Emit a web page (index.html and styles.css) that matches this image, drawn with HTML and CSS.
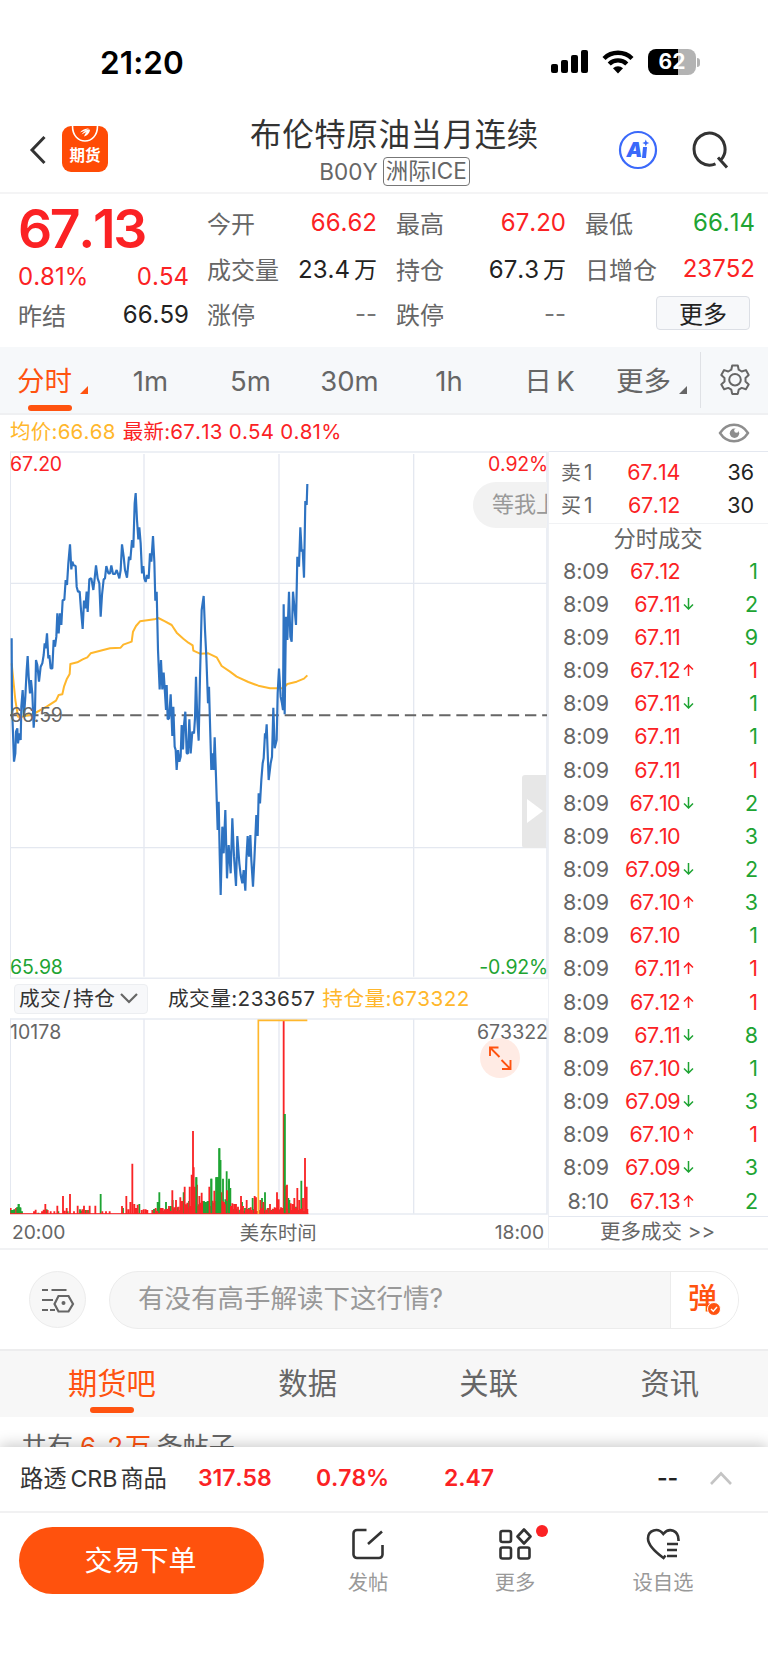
FILE: index.html
```html
<!DOCTYPE html>
<html lang="zh-CN">
<head>
    <meta charset="UTF-8">
    <meta name="viewport" content="width=device-width, initial-scale=1.0">
    <title>布伦特原油当月连续</title>
    <link rel="stylesheet" href="styles.css">
</head>
<body>
    <div class="status">
        <span class="clock">21:20</span>
        <div class="status-icons">
            <svg width="38" height="24" viewBox="0 0 38 24">
                <rect x="0" y="14" width="7" height="9" rx="2"/>
                <rect x="10" y="10" width="7" height="13" rx="2"/>
                <rect x="20" y="5" width="7" height="18" rx="2"/>
                <rect x="30" y="0" width="7" height="23" rx="2"/>
            </svg>
            <svg class="wifi" width="32" height="24" viewBox="0 0 32 24">
                <path d="M2 8.5a20 20 0 0 1 28 0M7.2 14a12.6 12.6 0 0 1 17.6 0" fill="none" stroke="#000" stroke-width="4.4"/>
                <path d="M16 23.5l-5-5.2a7.2 7.2 0 0 1 10 0z"/>
            </svg>
            <div class="battery"><span>62</span></div>
            <i class="nub"></i>
        </div>
    </div>

    <header class="header">
        <div class="header-left">
            <svg width="18" height="30" viewBox="0 0 18 30"><path d="M15.500 2L3 15l12.500 13" fill="none" stroke="#333" stroke-width="3"/></svg>
            <div class="logo">
                <svg width="46" height="19" viewBox="0 0 46 19">
                    <path d="M10.500 0c0 20 25 20 25 0" fill="none" stroke="#fff" stroke-width="1.600"/>
                    <path d="M18 6.500c2-2.500 5-4 9-4.200-1.500 1.600-5 2.700-9 4.200zM19.500 8.500c2-3 5-5 8-5.500-2 2.500-4.500 4-8 5.500zM22 10.500c1-3 3-6 6-7 0 3-2.500 6-6 7z" fill="#fff"/>
                </svg>
                <b>期货</b>
            </div>
        </div>
        <div class="header-title">
            <h1>布伦特原油当月连续</h1>
            <p>B00Y <span>洲际ICE</span></p>
        </div>
        <div class="header-right">
            <svg width="40" height="40" viewBox="0 0 40 40">
                <circle cx="20" cy="20" r="18" fill="none" stroke="#3b69fa" stroke-width="2.200"/>
                <text x="8.500" y="27" class="ai-text">A</text>
                <path d="M25 17h4l-1 11h-4z" fill="#3b69fa"/>
                <path d="M27.800 9.500l1 2.500 2.500 1-2.500 1-1 2.500-1-2.500-2.500-1 2.500-1z" fill="#3b69fa"/>
            </svg>
            <svg width="38" height="40" viewBox="0 0 38 40">
                <path d="M24.500 33.800a15.500 16 0 1 1 5.500-4M27 27.500l9 10" fill="none" stroke="#333" stroke-width="3"/>
            </svg>
        </div>
    </header>

    <section class="quote">
        <div class="quote-main">
            <strong>67.13</strong>
            <p class="red"><span>0.81%</span><span>0.54</span></p>
            <p class="settle"><em>昨结</em><span>66.59</span></p>
        </div>
        <div class="quote-grid">
            <p><em>今开</em><span class="red">66.62</span></p>
            <p><em>最高</em><span class="red">67.20</span></p>
            <p><em>最低</em><span class="green">66.14</span></p>
            <p><em>成交量</em><span>23.4<i>万</i></span></p>
            <p><em>持仓</em><span>67.3<i>万</i></span></p>
            <p><em>日增仓</em><span class="red">23752</span></p>
            <p><em>涨停</em><span class="none">--</span></p>
            <p><em>跌停</em><span class="none">--</span></p>
            <p class="more-cell"><button class="more-btn">更多</button></p>
        </div>
    </section>

    <nav class="periods">
        <a class="active tri p1">分时</a>
        <a class="p2">1m</a>
        <a class="p3">5m</a>
        <a class="p4">30m</a>
        <a class="p5">1h</a>
        <a class="p6">日 K</a>
        <a class="tri p7">更多</a>
        <div class="gear">
            <svg width="34" height="34" viewBox="0 0 34 34" fill="none" stroke="#666" stroke-width="2" stroke-linejoin="round">
                <path d="M14.200 2.500h5.600l.9 4.200 3 1.800 4.200-1.400 2.800 4.900-3.200 2.900v3.600l3.200 2.900-2.800 4.900-4.200-1.400-3 1.800-.9 4.200h-5.600l-.9-4.200-3-1.800-4.200 1.400-2.800-4.900 3.200-2.900v-3.600l-3.200-2.900 2.800-4.900 4.200 1.400 3-1.800z"/>
                <circle cx="17" cy="16.700" r="5.800"/>
            </svg>
        </div>
    </nav>

    <div class="info">
        <span class="avg">均价:66.68</span>
        <span class="red">最新:67.13 0.54 0.81%</span>
        <svg width="32" height="22" viewBox="0 0 32 22">
            <path d="M2 11C9 0 23 0 30 11 23 22 9 22 2 11z" fill="none" stroke="#8e8e8e" stroke-width="2.400"/>
            <circle cx="16.500" cy="11.300" r="4.700" fill="#8e8e8e"/>
            <circle cx="18.500" cy="8.500" r="2.300" fill="#fff"/>
        </svg>
    </div>

    <main class="market">
        <div class="charts">
            <div class="pane price">
                <svg width="538" height="528" viewBox="30 123 1614 1584" fill="none">
                    <path d="M31 125V1707M432 132V1700M837 132V1700M1241 132V1700M30 520H1641M30 1313H1641" stroke="#e4e8f0" stroke-width="4"/>
                    <path d="M30 126H1641V1705H30" stroke="#e8ebf2" stroke-width="5"/>
                    <path d="M30 916H1641" stroke="#666" stroke-width="6" stroke-dasharray="34 17.500"/>
                    <polyline class="line-avg" points="35,760 40,810 46,870 54,920 66,920 100,912 140,890 168,872 176,855 187,853 192,830 200,808 209,792 211,762 232,757 248,748 262,742 272,730 298,723 330,715 362,713 370,704 395,695 399,665 408,648 420,634 463,628 475,624 495,634 515,645 530,668 550,686 565,698 578,706 580,722 600,731 625,730 650,742 665,768 690,785 710,800 745,816 775,827 810,835 850,835 862,822 890,815 912,806 922,796"/>
                    <polyline class="line-price" points="35,685 36,890 39,970 42,1055 46,1030 48,965 52,955 54,1000 58,970 62,990 64,890 68,840 72,920 76,860 80,780 83,738 86,800 90,850 93,810 97,850 101,953 105,900 108,750 112,765 117,815 122,770 127,760 131,735 134,700 137,715 141,670 145,745 148,735 152,775 157,775 161,690 165,710 169,680 172,610 176,670 180,610 184,645 188,570 193,570 197,510 201,525 205,460 210,403 214,478 217,455 221,466 227,468 230,530 234,545 239,545 243,600 248,657 252,572 256,595 260,545 263,606 268,508 274,505 280,540 284,505 288,466 293,505 298,520 302,620 306,555 311,508 315,505 319,468 325,490 330,490 334,466 339,492 345,492 350,480 354,492 358,505 362,480 366,403 371,440 375,480 381,503 387,440 391,450 396,390 400,413 404,280 407,249 411,330 415,388 418,352 422,400 426,490 430,468 433,505 437,516 441,495 446,506 450,430 454,455 459,378 463,455 466,572 470,545 474,720 479,838 483,750 487,838 491,788 495,850 498,900 500,825 503,928 507,925 512,853 517,978 520,890 524,1010 527,1020 530,1080 534,1020 538,1055 542,1040 545,945 549,1018 552,945 556,905 560,1030 564,1030 568,928 572,1030 577,965 582,970 585,925 588,800 592,930 596,992 600,800 605,600 611,558 615,660 619,740 624,880 627,830 630,940 634,1080 638,1030 641,1080 644,982 648,1100 653,1260 656,1175 659,1330 662,1455 667,1250 671,1330 676,1200 681,1405 686,1305 692,1390 697,1225 702,1340 708,1428 712,1278 718,1360 722,1395 727,1420 731,1380 736,1442 739,1350 743,1278 747,1340 751,1275 754,1350 759,1430 763,1350 769,1215 773,1278 776,1150 780,1180 784,1110 788,1060 791,1045 795,970 797,985 800,943 806,1110 812,1060 816,1040 820,893 824,1015 830,990 833,850 837,776 842,860 846,880 849,900 851,583 854,913 858,620 862,690 867,545 871,680 875,695 879,545 884,600 888,645 892,440 897,470 901,352 905,425 908,418 912,503 916,273 920,285 922,222"/>
                </svg>
                <span class="lab tl red">67.20</span>
                <span class="lab tr red">0.92%</span>
                <span class="lab ml">66.59</span>
                <span class="lab bl green">65.98</span>
                <span class="lab br green">-0.92%</span>
                <div class="bubble">等我上</div>
                <div class="drawer"></div>
            </div>

            <div class="vol-bar">
                <div class="select">成交<i>/</i>持仓
                    <svg width="20" height="13" viewBox="0 0 20 13"><path d="M2 2l8 8 8-8" fill="none" stroke="#666" stroke-width="2.200"/></svg>
                </div>
                <span class="vol">成交量:233657</span>
                <span class="avg">持仓量:673322</span>
            </div>

            <div class="pane volume">
                <svg width="538" height="197" viewBox="30 128 1614 591" fill="none">
                    <path d="M31 130V716M432 130V716M837 130V716M1241 130V716" stroke="#e4e8f0" stroke-width="4"/>
                    <path d="M30 131H1641V716H30" stroke="#e8ebf2" stroke-width="5"/>
                    <g id="bars" stroke-width="5.500"></g>
                    <path d="M775 716V135H922" stroke="#ffb72c" stroke-width="5"/>
                </svg>
                <span class="lab tl">10178</span>
                <span class="lab tr">673322</span>
                <div class="expand">
                    <svg width="26" height="26" viewBox="0 0 26 26"><path d="M3 11V2.500h8.500M3 2.500L12.500 12M23.500 15v9H15M23.500 24L14.500 15" fill="none" stroke="#ff5310" stroke-width="1.900"/></svg>
                </div>
            </div>
            <div class="axis"><span>20:00</span><span>美东时间</span><span>18:00</span></div>
        </div>

        <aside class="trades">
            <div class="depth">
                <p><em>卖<i>1</i></em><span class="red">67.14</span><b>36</b></p>
                <p><em>买<i>1</i></em><span class="red">67.12</span><b>30</b></p>
            </div>
            <h2>分时成交</h2>
            <div id="list"></div>
            <a class="more-trades">更多成交 &gt;&gt;</a>
        </aside>
    </main>

    <div class="comment">
        <div class="round">
            <svg width="34" height="26" viewBox="0 0 34 26" fill="none" stroke="#666" stroke-width="2.200">
                <path d="M1 3h6M10.500 3h15M1 13h11M1 23h6M9 23h5"/>
                <path d="M17.500 9h10l4.500 8-4.500 7.500h-10L13.500 17z"/>
                <circle cx="22.500" cy="16" r="2" fill="#666" stroke="none"/>
            </svg>
        </div>
        <div class="input">
            <span>有没有高手解读下这行情?</span>
            <div class="dan">弹
                <svg width="14" height="14" viewBox="0 0 14 14"><circle cx="7" cy="7" r="6.500" fill="#ff5310" stroke="#fff"/><path d="M4 7l2.300 2.300L10 5" fill="none" stroke="#fff" stroke-width="1.400"/></svg>
            </div>
        </div>
    </div>

    <nav class="tabs">
        <a class="active">期货吧</a>
        <a>数据</a>
        <a>关联</a>
        <a>资讯</a>
    </nav>

    <div class="posts"><p>共有<b>6.2万</b>条帖子</p></div>

    <div class="index-bar">
        <span class="name">路透<i>CRB</i>商品</span>
        <b class="red i1">317.58</b>
        <b class="red i2">0.78%</b>
        <b class="red i3">2.47</b>
        <b class="i4">--</b>
        <svg width="24" height="14" viewBox="0 0 24 14"><path d="M2 13L12 2.500 22 13" fill="none" stroke="#c4c4c4" stroke-width="2.600"/></svg>
    </div>

    <footer class="actions">
        <button class="order">交易下单</button>
        <a>
            <svg width="34" height="34" viewBox="0 0 34 34" fill="none" stroke="#333" stroke-width="2.600">
                <path d="M15.500 3H6a3.500 3.500 0 0 0-3.500 3.500v21A3.500 3.500 0 0 0 6 31h22a3.500 3.500 0 0 0 3.500-3.500V18M31 4.500L17 17"/>
            </svg>
            发帖
        </a>
        <a class="has-dot">
            <svg width="34" height="34" viewBox="0 0 34 34" fill="none" stroke="#333" stroke-width="2.600">
                <rect x="2.500" y="4" width="10.500" height="11" rx="2"/>
                <rect x="2.500" y="20.500" width="10.500" height="11" rx="2"/>
                <rect x="20.500" y="20.500" width="11" height="11" rx="2"/>
                <path d="M26 2.500l6.500 7-6.500 7-6.500-7z" stroke-linejoin="round"/>
            </svg>
            更多
        </a>
        <a>
            <svg width="34" height="34" viewBox="0 0 34 34" fill="none" stroke="#333" stroke-width="2.600">
                <path d="M19.500 28.500L17.500 31C10 25.500 2 19 2 11.500 2 3 12 0 17.300 7 23 0 33 3 32.500 14M21 17h11M21 23h10M21 29h10"/>
            </svg>
            设自选
        </a>
    </footer>

    <script>
        // price, direction (1 up, -1 down, 0 same), lots, side
        const trades = [
            ["67.12", 0, 1, "g"], ["67.11", -1, 2, "g"], ["67.11", 0, 9, "g"], ["67.12", 1, 1, "r"],
            ["67.11", -1, 1, "g"], ["67.11", 0, 1, "g"], ["67.11", 0, 1, "r"], ["67.10", -1, 2, "g"],
            ["67.10", 0, 3, "g"], ["67.09", -1, 2, "g"], ["67.10", 1, 3, "g"], ["67.10", 0, 1, "g"],
            ["67.11", 1, 1, "r"], ["67.12", 1, 1, "r"], ["67.11", -1, 8, "g"], ["67.10", -1, 1, "g"],
            ["67.09", -1, 3, "g"], ["67.10", 1, 1, "r"], ["67.09", -1, 3, "g"], ["67.13", 1, 2, "g"]
        ];
        const up = '<svg class="red" width="11" height="12" viewBox="0 0 11 12"><path d="M5.500 12V1.500M1 5.500l4.500-4.500L10 5.500"/></svg>';
        const down = '<svg class="green" width="11" height="12" viewBox="0 0 11 12"><path d="M5.500 0v10.500M1 6.500L5.500 11 10 6.500"/></svg>';
        document.getElementById("list").innerHTML = trades.map((t, i) => {
            const time = i === trades.length - 1 ? "8:10" : "8:09";
            const arrow = t[1] > 0 ? up : t[1] < 0 ? down : "";
            const side = t[3] === "r" ? "red" : "green";
            return `<p><em>${time}</em><span class="red">${t[0]}</span><i>${arrow}</i><b class="${side}">${t[2]}</b></p>`;
        }).join("");

        // volume bars: x, height
        const base = 716;
        const red = [[32,18],[36,8],[48,18],[102,8],[107,13],[126,8],[131,13],[136,30],[143,12],[152,8],[163,8],[172,25],[189,54],[194,10],[200,18],[210,60],[222,8],[233,25],[247,14],[252,25],[260,12],[269,25],[286,25],[307,8],[318,8],[329,8],[366,24],[379,54],[385,14],[391,36],[397,151],[403,30],[408,18],[413,28],[425,12],[431,14],[437,14],[442,12],[482,18],[488,18],[494,14],[500,16],[507,24],[517,71],[523,20],[528,42],[535,22],[541,50],[546,38],[554,82],[563,20],[569,82],[575,118],[579,249],[581,140],[585,82],[591,88],[598,54],[605,64],[628,82],[637,40],[643,70],[664,65],[672,36],[681,71],[697,32],[703,30],[708,30],[714,22],[723,54],[729,24],[740,42],[746,14],[752,20],[764,54],[768,50],[781,42],[790,36],[803,18],[810,30],[818,16],[824,20],[831,65],[836,44],[843,20],[851,582],[857,85],[861,88],[872,32],[878,30],[883,48],[892,78],[898,42],[909,48],[915,168],[920,82]];
        const green = [[34,12],[38,12],[43,14],[52,20],[56,30],[61,20],[66,8],[115,4],[140,14],[175,8],[203,8],[240,14],[244,10],[256,12],[264,12],[302,60],[369,18],[418,30],[460,10],[466,14],[473,36],[478,65],[498,36],[512,24],[518,42],[533,20],[551,65],[559,24],[589,110],[612,38],[617,36],[623,38],[634,106],[649,110],[654,110],[658,197],[661,162],[669,106],[676,44],[680,128],[687,106],[691,78],[710,16],[726,36],[735,18],[758,48],[786,48],[795,65],[814,12],[854,300],[865,48],[868,42],[888,22],[904,100]];
        // low background volume under the peaks
        for (let x = 457; x < 924; x += 5) {
            (x % 3 ? red : green).push([x, x > 540 && x < 700 ? 24 + x % 4 * 5 : 9 + x % 4 * 3]);
        }
        const bars = (list, color) => `<path stroke="${color}" d="${list.map(b => `M${b[0]} ${base}v-${b[1]}`).join("")}"/>`;
        document.getElementById("bars").innerHTML =
            bars(green, "#1ea433") + bars(red, "#f92426") +
            bars([[34,12],[38,12],[43,13],[52,20],[56,30],[61,18],[589,110],[612,38],[617,36],[623,38],[634,106],[649,110],[654,110],[658,197],[661,162],[680,40],[687,100],[854,300]], "#1ea433") +
            `<path stroke="#f92426" stroke-width="3" d="M30 715H925"/>`;
    </script>
</body>
</html>
```
FILE: styles.css
```css
* {
    box-sizing: border-box;
}

body {
    margin: 0;
    width: 768px;
    height: 1670px;
    overflow: hidden;
    background: #fff;
    color: #222;
    font-family: Inter, "Noto Sans CJK SC", sans-serif;
    font-size: 24px;
    font-kerning: none;
}

h1, h2, p {
    margin: 0;
    font-weight: 400;
}

em, i {
    font-style: normal;
}

svg {
    display: block;
    flex: none;
}

.red { color: #fb2224; }
.green { color: #1ea433; }
.avg { color: #ffb72c; }

/* status bar */
.status {
    height: 112px;
    padding: 12px 68px 0 100px;
    display: flex;
    justify-content: space-between;
    align-items: center;
}
.clock {
    font-size: 31.500px;
    font-weight: 600;
    color: #000;
    letter-spacing: .1px;
}
.status-icons {
    display: flex;
    align-items: center;
}
.wifi {
    margin: 0 14px 0 13px;
}
.battery {
    width: 48px;
    height: 26px;
    border-radius: 8px;
    background: linear-gradient(90deg, #000 62%, #b3b3b3 62%);
    color: #fff;
    font-size: 21px;
    font-weight: 700;
    line-height: 26px;
    text-align: center;
}
.nub {
    width: 3px;
    height: 9px;
    margin-left: 1px;
    border-radius: 0 4px 4px 0;
    background: #b3b3b3;
}

/* header */
.header {
    height: 82px;
    border-bottom: 2px solid #f4f4f5;
    display: flex;
    justify-content: space-between;
    padding: 0 39px 0 29px;
}
.header-left, .header-right {
    width: 140px;
    height: 76px;
    display: flex;
    align-items: center;
}
.header-left { gap: 15px; }
.header-right {
    justify-content: flex-end;
    gap: 33px;
}
.logo {
    width: 46px;
    height: 46px;
    border-radius: 9px;
    background: #ff4b05;
    overflow: hidden;
    margin-top: -2px;
}
.logo b {
    display: block;
    color: #fff;
    font-size: 15.500px;
    line-height: 22px;
    text-align: center;
}
.ai-text {
    font-size: 20px;
    font-weight: 900;
    font-style: italic;
    fill: #3b69fa;
}
.header-title {
    text-align: center;
    padding: 1px 0 0 31px;
}
.header-title h1 {
    font-size: 31.500px;
    letter-spacing: .6px;
    line-height: 43px;
    color: #333;
}
.header-title p {
    display: flex;
    justify-content: center;
    align-items: center;
    gap: 5px;
    margin-top: 1px;
    font-size: 22.500px;
    color: #666;
}
.header-title p span {
    height: 29px;
    line-height: 25px;
    padding: 0 2px;
    border: 1.500px solid #777;
    border-radius: 4px;
}

/* quote */
.quote {
    height: 153px;
    display: flex;
    padding: 5px 12px 0 18px;
}
.quote-main {
    width: 171px;
    margin-right: 18px;
}
.quote-main strong {
    display: block;
    height: 58px;
    line-height: 60px;
    font-size: 53.500px;
    font-weight: 600;
    letter-spacing: -2.400px;
    color: #fb2224;
}
.quote p {
    display: flex;
    justify-content: space-between;
    align-items: center;
    letter-spacing: 0;
}
.quote-main p {
    height: 38px;
}
.quote em {
    color: #666;
}
.quote-grid {
    flex: 1;
    padding-top: 1px;
    display: grid;
    grid-template-columns: repeat(3, 170px);
    column-gap: 19px;
    grid-template-rows: repeat(3, 45.500px);
}
.quote-grid i {
    margin-left: 4px;
    font-size: 23px;
}
.none { color: #777; }
.quote .more-cell {
    justify-content: flex-end;
    padding-right: 5px;
}
.more-btn {
    width: 94px;
    height: 34px;
    padding: 0;
    border: 1.500px solid #dcdfe5;
    border-radius: 4px;
    background: #f7f8fa;
    font: 24px/29px "Noto Sans CJK SC", sans-serif;
    color: #222;
}
.quote-grid .more-btn {
    margin-top: -2px;
}

/* period tabs */
.periods {
    height: 68px;
    background: #f6f8fa;
    border-bottom: 2px solid #eff0f2;
    display: grid;
    grid-template-columns: 104px 93px 107px 91px 108px 93px 104px 68px;
    align-items: center;
    font-size: 27.500px;
    color: #666;
    text-align: center;
}
.periods a {
    height: 66px;
    line-height: 68px;
    position: relative;
    white-space: nowrap;
}
.p1, .p7 { text-align: left; }
.p1 { padding-left: 17px; }
.p7 { padding-left: 20px; }
.p6 {
    padding-left: 0;
    word-spacing: -3px;
}
.periods .active { color: #ff5310; }
.periods .active::before {
    content: "";
    position: absolute;
    left: 28px;
    bottom: 2px;
    width: 44px;
    height: 6px;
    border-radius: 3px;
    background: #ff5310;
}
.tri::after {
    content: "";
    display: inline-block;
    margin: 0 0 -3px 8px;
    border-left: 8px solid transparent;
    border-bottom: 8px solid currentColor;
}
.gear {
    height: 56px;
    border-left: 1px solid #dfe1e5;
    display: flex;
    align-items: center;
    justify-content: center;
}

.info {
    height: 36px;
    padding: 0 18px 0 10px;
    display: flex;
    align-items: center;
    gap: 7px;
    font-size: 20.500px;
    line-height: 34px;
    letter-spacing: .25px;
}
.info span {
    height: 36px;
}
.info svg {
    margin-left: auto;
}

/* charts */
.market {
    display: flex;
    height: 799px;
    border-bottom: 2px solid #f1f2f4;
}
.charts {
    width: 548px;
    padding-left: 10px;
}
.pane {
    position: relative;
    overflow: hidden;
}
.price { height: 528px; }
.volume { height: 197px; }
.line-price {
    stroke: #2e73c2;
    stroke-width: 6.500;
    stroke-linejoin: bevel;
}
.line-avg {
    stroke: #ffb72c;
    stroke-width: 6;
    stroke-linejoin: round;
}
.lab {
    position: absolute;
    font-size: 19.500px;
    line-height: 24px;
    letter-spacing: -.2px;
}
.volume .lab, .ml { color: #666; }
.tl { left: 0; top: 1px; }
.tr { right: 0; top: 1px; }
.ml { left: 0; top: 252px; }
.bl { left: 0; bottom: 0; }
.br { right: 0; bottom: 0; }
.volume .lab {
    top: 2px;
    letter-spacing: 0;
}
.bubble {
    position: absolute;
    right: 1px;
    top: 31px;
    width: 74px;
    height: 46px;
    padding-left: 19px;
    border-radius: 23px 0 0 23px;
    background: #f2f2f2;
    color: #999;
    font-size: 22px;
    line-height: 44px;
    white-space: nowrap;
    overflow: hidden;
}
.drawer {
    position: absolute;
    right: 2px;
    top: 324px;
    width: 24px;
    height: 73px;
    background: #e7e7e7;
    border-radius: 3px 0 0 3px;
}
.drawer::after {
    content: "";
    position: absolute;
    left: 5px;
    top: 24px;
    border: 12px solid transparent;
    border-left: 16px solid #fff;
    border-right: 0;
}
.vol-bar {
    height: 39px;
    display: flex;
    align-items: center;
    font-size: 20.700px;
    letter-spacing: .4px;
    line-height: 28px;
}
.select {
    width: 134px;
    height: 30px;
    margin: 0 20px 0 4px;
    padding: 0 8px 0 4px;
    border: 1px solid #eceef1;
    border-radius: 4px;
    background: #f7f8fa;
    display: flex;
    align-items: center;
    color: #333;
}
.select i {
    margin: 0 2px;
}
.select svg {
    margin-left: auto;
}
.vol {
    margin-right: 7px;
    color: #333;
}
.expand {
    position: absolute;
    left: 470px;
    top: 20px;
    width: 40px;
    height: 40px;
    border-radius: 50%;
    background: #ffebe4;
    display: flex;
    align-items: center;
    justify-content: center;
}
.axis {
    height: 33px;
    padding: 0 4px 0 2px;
    display: flex;
    justify-content: space-between;
    align-items: center;
    font-size: 19.300px;
    letter-spacing: -.1px;
    color: #666;
}
.axis span:nth-child(2) {
    margin-right: 4px;
}

/* trades column */
.trades {
    flex: 1;
    border-left: 1px solid #eef0f4;
    font-size: 21.500px;
}
.depth {
    height: 73px;
    padding-top: 3px;
    border-top: 1px solid #e4e8f0;
    border-bottom: 1px solid #f1f2f4;
}
.trades p {
    display: grid;
    grid-template-columns: 60px 71px 16px 1fr;
    align-items: center;
    text-align: right;
    padding-right: 10px;
    height: 33.160px;
    letter-spacing: -.1px;
}
.trades span {
    letter-spacing: -.7px;
}
.trades .depth p {
    grid-template-columns: 12px 60px 59px 1fr;
    padding-right: 14px;
    height: 33px;
}
.depth span {
    letter-spacing: -.3px;
}
.depth em {
    grid-column: 2;
    text-align: left;
    font-size: 20px;
}
.depth i {
    margin-left: 3px;
    font-size: 21px;
}
.trades em { color: #666; }
.trades b { font-weight: 400; }
.trades i svg {
    margin-left: 3px;
    fill: none;
    stroke: currentColor;
    stroke-width: 1.500;
}
.trades h2 {
    height: 30px;
    line-height: 29px;
    font-size: 22.300px;
    color: #666;
    text-align: center;
    padding-right: 1px;
}
#list { height: 662px; }
.more-trades {
    display: block;
    height: 32px;
    line-height: 29px;
    border-top: 1px solid #e4e8f0;
    text-align: center;
    color: #666;
    font-size: 20.500px;
    padding-right: 2px;
}

/* comment input */
.comment {
    height: 99px;
    padding: 0 29px;
    display: flex;
    align-items: center;
    justify-content: space-between;
}
.round {
    width: 57px;
    height: 57px;
    border: 1px solid #ececec;
    border-radius: 50%;
    background: #f7f7f7;
    display: flex;
    align-items: center;
    justify-content: center;
}
.input {
    width: 630px;
    height: 58px;
    border: 1.500px solid #ececec;
    border-radius: 29px;
    background: #f7f7f7;
    overflow: hidden;
    display: flex;
    justify-content: space-between;
    align-items: center;
    padding-left: 28px;
    font-size: 26.500px;
    line-height: 54px;
    color: #999;
}
.input > span {
    height: 57px;
}
.dan {
    position: relative;
    width: 68px;
    height: 56px;
    border-left: 1px solid #ececec;
    background: #fff;
    padding-left: 17px;
    font-size: 29px;
    font-weight: 500;
    line-height: 54px;
    color: #ff5310;
}
.dan svg {
    position: absolute;
    left: 36px;
    top: 30px;
}

.tabs {
    height: 68px;
    border-top: 2px solid #ededee;
    background: #f7f7f7;
    padding: 0 69px 0 68px;
    display: flex;
    justify-content: space-between;
    font-size: 29.300px;
    line-height: 66px;
    color: #666;
}
.tabs a { position: relative; }
.tabs .active {
    color: #ff5310;
}
.tabs .active::after {
    content: "";
    position: absolute;
    left: 22px;
    bottom: 4px;
    width: 44px;
    height: 6px;
    border-radius: 3px;
    background: #ff5310;
}

.posts {
    height: 30px;
    overflow: hidden;
    padding: 9px 0 0 21px;
    font-size: 26px;
    color: #666;
}
.posts b {
    margin: 0 4px 0 7px;
    font-weight: 400;
    color: #ff5310;
    letter-spacing: 1.800px;
}

/* bottom bars */
.index-bar {
    position: relative;
    height: 66px;
    border-bottom: 2px solid #f1f1f2;
    background: #fff;
    box-shadow: 0 -2px 14px rgba(0, 0, 0, .22);
    display: grid;
    grid-template-columns: 178px 118px 128px 213px 52px 24px;
    padding: 0 0 2px 20px;
    align-items: center;
    font-size: 23px;
    letter-spacing: -.1px;
}
.index-bar .name {
    color: #333;
    font-size: 23.300px;
    padding-bottom: 2px;
}
.name i {
    margin: 0 3px 0 4px;
}
.index-bar b {
    font-weight: 600;
}
.actions {
    position: relative;
    height: 158px;
    background: #fff;
    padding: 14px 0 0 19px;
    display: grid;
    grid-template-columns: 245px 208px 86px 210px;
    font-size: 20.300px;
}
.order {
    width: 245px;
    height: 67px;
    padding: 0 2px 3px 0;
    border: 0;
    border-radius: 34px;
    background: #ff520d;
    color: #fff;
    font: 28px "Noto Sans CJK SC", sans-serif;
}
.actions a {
    position: relative;
    display: flex;
    flex-direction: column;
    align-items: center;
    gap: 5px;
    color: #999;
}
.has-dot::after {
    content: "";
    position: absolute;
    left: 64px;
    top: -2px;
    width: 12px;
    height: 12px;
    border-radius: 50%;
    background: #fb2224;
}
```
